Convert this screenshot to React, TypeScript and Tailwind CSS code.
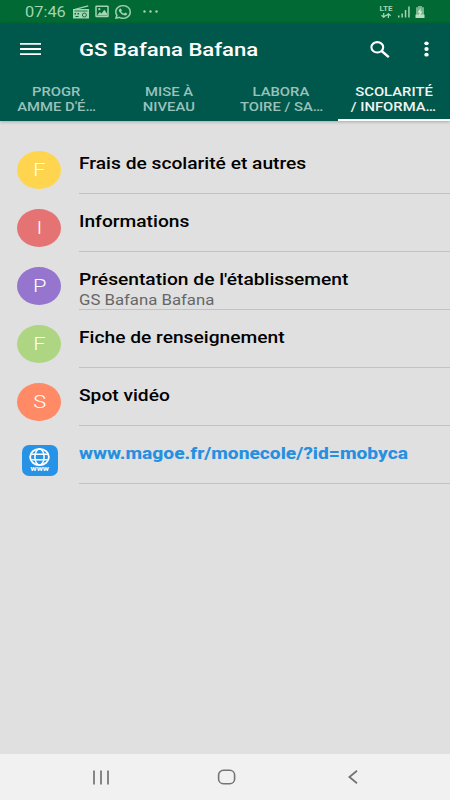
import type { ReactNode } from 'react';
import clsx from 'clsx';

interface StretchProps {
  className?: string;
  children: ReactNode;
}

const Stretch = ({ className, children }: StretchProps) => (
  <span className={clsx('inline-block whitespace-nowrap', className)}>{children}</span>
);

const tabs = [
  { lines: ['PROGR', "AMME D'É…"] },
  { lines: ['MISE À', 'NIVEAU'] },
  { lines: ['LABORA', 'TOIRE / SA…'] },
  { lines: ['SCOLARITÉ', '/ INFORMA…'], active: true },
];

const items = [
  { letter: 'F', color: 'bg-[#ffd54f]', title: 'Frais de scolarité et autres' },
  { letter: 'I', color: 'bg-[#e57373]', title: 'Informations' },
  {
    letter: 'P',
    color: 'bg-[#9575cd]',
    title: "Présentation de l'établissement",
    subtitle: 'GS Bafana Bafana',
  },
  { letter: 'F', color: 'bg-[#aed581]', title: 'Fiche de renseignement' },
  { letter: 'S', color: 'bg-[#ff8a65]', title: 'Spot vidéo' },
];

const RadioIcon = () => (
  <svg className="ml-[7px] h-[14px] w-4" viewBox="0 0 16 14" fill="none">
    <path d="M2 4.4 15.2.8" stroke="#a3d5b0" strokeWidth="1.2" />
    <path d="M0 4h16v9.5H0z" fill="#a3d5b0" />
    <path d="M1.5 6h13" stroke="#006934" strokeWidth=".8" />
    <circle cx="11.4" cy="10" r="2" stroke="#006934" strokeWidth=".9" />
    <path d="M1.5 8H3v1.5H1.5zM4.5 8H6v1.5H4.5zM2.5 11h3v1h-3z" fill="#006934" />
  </svg>
);

const PictureIcon = () => (
  <svg className="ml-1.5 h-[13px] w-[14px]" viewBox="0 0 14 13" fill="none">
    <rect x="1" y="1.2" width="12" height="10.4" rx=".6" stroke="#a3d5b0" strokeWidth="1.5" />
    <path d="m2 10.5 2.8-3.6 1.8 1.6 2.7-3.8L12 8.6v1.9z" fill="#a3d5b0" />
    <circle cx="4.3" cy="4.2" r="1.1" fill="#a3d5b0" />
  </svg>
);

const WhatsAppIcon = () => (
  <svg className="ml-[6px] h-[14px] w-4" viewBox="0 0 24 24" preserveAspectRatio="none" fill="#a3d5b0" stroke="#a3d5b0" strokeWidth=".4">
    <path d="M17.472 14.382c-.297-.149-1.758-.867-2.03-.967-.273-.099-.471-.148-.67.15-.197.297-.767.966-.94 1.164-.173.199-.347.223-.644.075-.297-.15-1.255-.463-2.39-1.475-.883-.788-1.48-1.761-1.653-2.059-.173-.297-.018-.458.13-.606.134-.133.298-.347.446-.52.149-.174.198-.298.298-.497.099-.198.05-.371-.025-.52-.075-.149-.669-1.612-.916-2.207-.242-.579-.487-.5-.669-.51-.173-.008-.371-.01-.57-.01-.198 0-.52.074-.792.372-.272.297-1.04 1.016-1.04 2.479 0 1.462 1.065 2.875 1.213 3.074.149.198 2.096 3.2 5.077 4.487.709.306 1.262.489 1.694.625.712.227 1.36.195 1.871.118.571-.085 1.758-.719 2.006-1.413.248-.694.248-1.289.173-1.413-.074-.124-.272-.198-.57-.347m-5.421 7.403h-.004a9.87 9.87 0 01-5.031-1.378l-.361-.214-3.741.982.998-3.648-.235-.374a9.86 9.86 0 01-1.51-5.26c.001-5.45 4.436-9.884 9.888-9.884 2.64 0 5.122 1.03 6.988 2.898a9.825 9.825 0 012.893 6.994c-.003 5.45-4.437 9.884-9.885 9.884m8.413-18.297A11.815 11.815 0 0012.05 0C5.495 0 .16 5.335.157 11.892c0 2.096.547 4.142 1.588 5.945L.057 24l6.305-1.654a11.882 11.882 0 005.683 1.448h.005c6.554 0 11.89-5.335 11.893-11.893a11.821 11.821 0 00-3.48-8.413z" />
  </svg>
);

const NetworkIcon = () => (
  <div className="mt-px ml-auto flex w-[14px] flex-col items-center">
    <Stretch className="scale-x-[1.08] text-[7.5px] leading-[6px] font-bold">LTE</Stretch>
    <svg className="mt-px h-[5px] w-[10px]" viewBox="0 0 10 5" fill="none" stroke="#a3d5b0" strokeWidth="1.2">
      <path d="M2.7 0v4M.5 2.2l2.2 2.1 2.2-2.1M7.4 5V1M5.2 2.8 7.4.7l2.2 2.1" />
    </svg>
  </div>
);

const SignalIcon = () => (
  <svg className="ml-[5px] h-3 w-3" viewBox="0 0 12 12" fill="#a3d5b0">
    <path d="M0 9.6h1.5V11.4H0zM3.4 7.4h1.5v4H3.4zM6.8 4h1.5v7.4H6.8zM10.2.5h1.5v10.9h-1.5z" />
  </svg>
);

const BatteryIcon = () => (
  <svg className="ml-[5px] h-3 w-[10px]" viewBox="0 0 10 12">
    <path d="M3 0h4v1.3h2V12H1V1.3h2z" fill="#74b387" />
    <path d="M.5 8.5h9V12h-9z" fill="#b9dcc1" />
    <path d="M5.8 2 2.6 6.6h2l-.6 3.8 3.4-5h-2z" fill="#d5efdb" />
  </svg>
);

const StatusBar = () => (
  <div className="flex h-[23px] items-center bg-[#006934] pr-[25px] pl-[25px] text-[#a3d5b0]">
    <div className="w-[41px]">
      <Stretch className="origin-left scale-x-[1.13] text-[14.5px] leading-[23px]">07:46</Stretch>
    </div>
    <RadioIcon />
    <PictureIcon />
    <WhatsAppIcon />
    <svg className="ml-3 h-[3px] w-[15px]" viewBox="0 0 15 3" fill="#a3d5b0">
      <circle cx="1.5" cy="1.5" r="1.2" />
      <circle cx="7.5" cy="1.5" r="1.2" />
      <circle cx="13.5" cy="1.5" r="1.2" />
    </svg>
    <NetworkIcon />
    <SignalIcon />
    <BatteryIcon />
  </div>
);

const Toolbar = () => (
  <div className="flex h-[53px] items-center pl-5 text-white">
    <svg className="mb-0.5 h-3 w-[21px]" viewBox="0 0 21 12" fill="#fff">
      <path d="M0 0h21v1.8H0zM0 5.1h21v1.8H0zM0 10.2h21V12H0z" />
    </svg>
    <h1 className="mt-0.5 ml-[38px] flex-1">
      <Stretch className="origin-left scale-x-[1.165] text-[19px] leading-6 font-medium">GS Bafana Bafana</Stretch>
    </h1>
    <svg className="h-[17px] w-5" viewBox="0 0 20 17" fill="none" stroke="#fff">
      <ellipse cx="7.3" cy="6.3" rx="5.9" ry="5.2" strokeWidth="2.1" />
      <path d="m11.6 10 7.2 6.1" strokeWidth="2.5" />
    </svg>
    <svg className="mr-[21px] mb-px ml-[34px] h-4 w-[5px]" viewBox="0 0 5 16" fill="#fff">
      <ellipse cx="2.5" cy="2.3" rx="2.2" ry="1.9" />
      <ellipse cx="2.5" cy="8" rx="2.2" ry="1.9" />
      <ellipse cx="2.5" cy="13.7" rx="2.2" ry="1.9" />
    </svg>
  </div>
);

const TabBar = () => (
  <div className="grid h-[45px] grid-cols-4">
    {tabs.map(({ lines, active }) => (
      <div
        key={lines[0]}
        className={clsx(
          'flex flex-col items-center border-b-2 pt-[9px] text-[13px] leading-[14.5px] font-medium',
          active ? 'border-white text-[#eef5f3]' : 'border-transparent text-[#99c2bb]',
        )}
      >
        {lines.map((line) => (
          <Stretch key={line} className="scale-x-[1.14]">
            {line}
          </Stretch>
        ))}
      </div>
    ))}
  </div>
);

const WebIcon = () => (
  <div className="ml-[22px] flex h-[31px] w-[35.5px] flex-col items-center rounded-[7px] bg-[#2793e6] pt-[3px]">
    <svg className="h-[18px] w-[21px]" viewBox="0 0 21 18" fill="none" stroke="#fff" strokeWidth="1.5">
      <ellipse cx="10.5" cy="9" rx="9.4" ry="8.1" strokeWidth="1.8" />
      <ellipse cx="10.5" cy="9" rx="4.6" ry="8" />
      <path d="M2.2 6.2h16.6M2.2 11.8h16.6" />
    </svg>
    <Stretch className="scale-x-[1.2] text-[7px] leading-[7px] font-bold text-white">www</Stretch>
  </div>
);

const App = () => (
  <div className="flex h-[800px] w-[450px] flex-col overflow-hidden bg-[#e0e0e0] font-[Roboto,sans-serif]">
    <StatusBar />
    <header className="bg-[#00574b] shadow-[0_1px_3px_rgba(0,0,0,0.25)]">
      <Toolbar />
      <TabBar />
    </header>
    <main className="flex-1 pt-[15px]">
      {items.map(({ letter, color, title, subtitle }) => (
        <div key={title} className="flex h-[58px]">
          <div className="w-[79px] pt-[15px] pl-[17.4px]">
            <div
              className={clsx(
                'flex h-[38px] w-[44px] items-center justify-center rounded-[50%] text-[19px] font-light text-white',
                color,
              )}
            >
              <Stretch className="scale-x-[1.15]">{letter}</Stretch>
            </div>
          </div>
          <div className="flex flex-1 flex-col items-start border-b border-[#c2c2c2] pt-[18px]">
            <Stretch className="origin-left scale-x-[1.163] text-[16.5px] leading-5 font-medium text-black">
              {title}
            </Stretch>
            {subtitle && (
              <Stretch className="mt-px origin-left scale-x-[1.155] text-[14.5px] leading-[19px] text-[#666]">
                {subtitle}
              </Stretch>
            )}
          </div>
        </div>
      ))}
      <div className="flex h-[58px]">
        <div className="w-[79px] pt-[19px]">
          <WebIcon />
        </div>
        <div className="flex flex-1 items-start border-b border-[#c2c2c2] pt-[18px]">
          <Stretch className="origin-left scale-x-[1.163] text-[16.5px] leading-5 font-extrabold text-[#2690e0]">
            www.magoe.fr/monecole/?id=mobyca
          </Stretch>
        </div>
      </div>
    </main>
    <nav className="flex h-[46px] items-center bg-[#f1f1f1]">
      <svg className="ml-[93px] h-[15px] w-4" viewBox="0 0 16 15" stroke="#747474" strokeWidth="1.7">
        <path d="M1 .5v14M8 .5v14M15 .5v14" />
      </svg>
      <svg className="ml-[108px] h-4 w-[19px]" viewBox="0 0 19 16" fill="none" stroke="#747474" strokeWidth="1.6">
        <rect x="1.6" y="1.3" width="16" height="13.4" rx="4.8" />
      </svg>
      <svg className="ml-[112px] h-[14px] w-[10px]" viewBox="0 0 10 14" fill="none" stroke="#747474" strokeWidth="1.8">
        <path d="M9 .8 1.4 7 9 13.2" />
      </svg>
    </nav>
  </div>
);

export default App;
